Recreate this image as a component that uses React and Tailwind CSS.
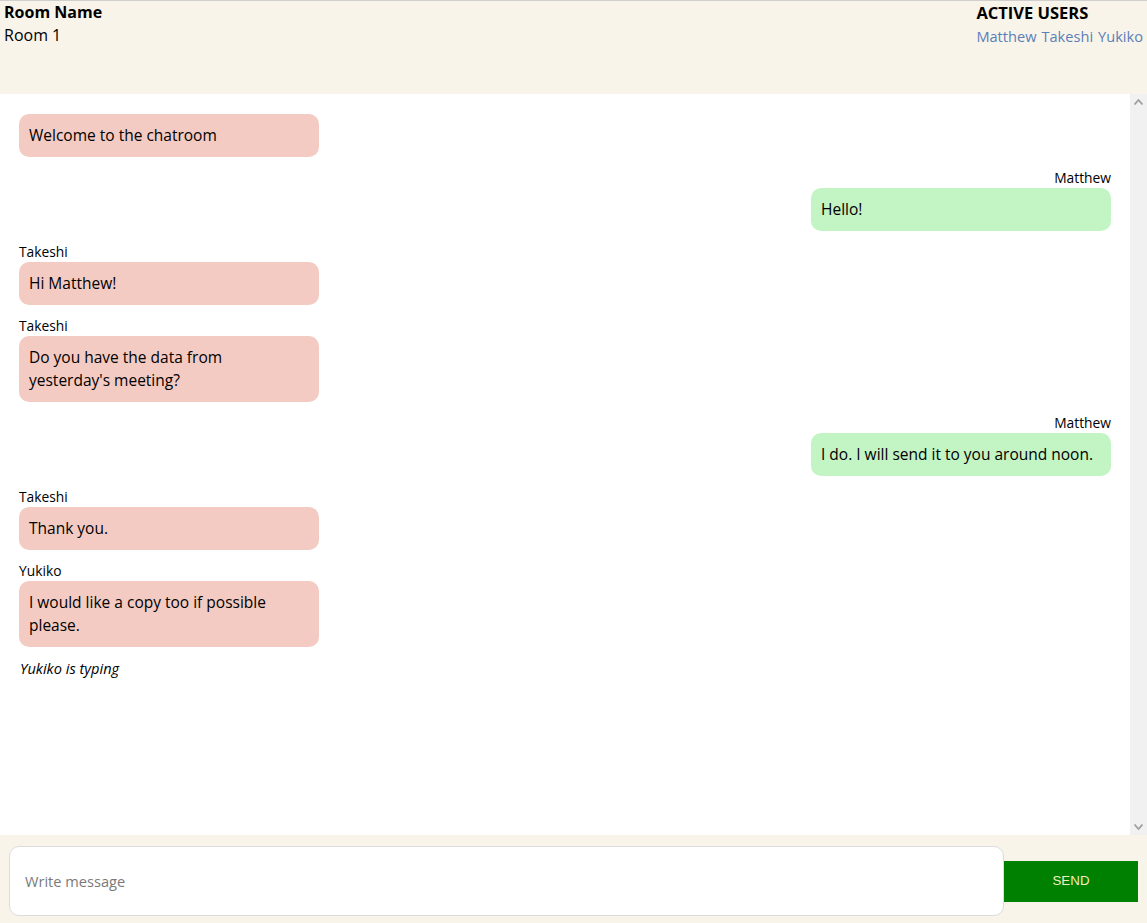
import React from "react";

const messages = [
  { user: null, text: ["Welcome to the chatroom"], mine: false },
  { user: "Matthew", text: ["Hello!"], mine: true },
  { user: "Takeshi", text: ["Hi Matthew!"], mine: false },
  { user: "Takeshi", text: ["Do you have the data from", "yesterday's meeting?"], mine: false },
  { user: "Matthew", text: ["I do. I will send it to you around noon."], mine: true },
  { user: "Takeshi", text: ["Thank you."], mine: false },
  { user: "Yukiko", text: ["I would like a copy too if possible please."], mine: false },
];

function Chevron({ up }) {
  return (
    <svg width="9" height="6" viewBox="0 0 9 6" className="block">
      <path
        d={up ? "M0.5 5.5 L4.5 1 L8.5 5.5" : "M0.5 0.5 L4.5 5 L8.5 0.5"}
        fill="none"
        stroke="#a0a0a0"
        strokeWidth="1.8"
      />
    </svg>
  );
}

export default function App() {
  return (
    <div
      className="flex flex-col h-[923px] w-full overflow-hidden text-black"
      style={{ fontFamily: '"Open Sans", "DejaVu Sans", sans-serif' }}
    >
      <header className="h-[94px] shrink-0 border-t border-[#cfcfcf] bg-[#f8f4ea] flex justify-between px-1">
        <div>
          <div className="text-[16px] leading-[22px] font-bold">Room Name</div>
          <div className="text-[16px] leading-[24px]">Room 1</div>
        </div>
        <div>
          <div className="text-[16.5px] leading-[24px] font-bold">ACTIVE USERS</div>
          <div className="text-[14.6px] leading-[22px] text-[#5b7fb8] flex gap-[5px]">
            <span>Matthew</span>
            <span>Takeshi</span>
            <span>Yukiko</span>
          </div>
        </div>
      </header>

      <div className="flex-1 flex min-h-0">
        <main className="flex-1 bg-white px-[19px] pt-5">
          {messages.map((m, i) => (
            <div
              key={i}
              className={`mb-[11px] flex flex-col ${m.mine ? "items-end" : "items-start"}`}
            >
              {m.user && (
                <div className="text-[13.8px] leading-[20px]">{m.user}</div>
              )}
              <div
                className={`w-[300px] rounded-[10px] p-[10px] text-[15.5px] leading-[23px] ${
                  m.mine ? "bg-[#c3f4c3]" : "bg-[#f4cbc2]"
                }`}
              >
                {m.text.map((line, j) => (
                  <React.Fragment key={j}>
                    {j > 0 && <br />}
                    {line}
                  </React.Fragment>
                ))}
              </div>
            </div>
          ))}
          <div className="text-[14.6px] leading-[20px] italic pl-px">Yukiko is typing</div>
        </main>
        <div className="w-[17px] shrink-0 bg-[#f1f1f1] flex flex-col justify-between items-center py-[5px]">
          <Chevron up />
          <Chevron />
        </div>
      </div>

      <footer className="h-[88px] shrink-0 bg-[#f8f4ea] flex items-center pt-1 pl-[9px] pr-[9px]">
        <input
          autoFocus
          placeholder="Write message"
          className="h-[70px] flex-1 rounded-[10px] border border-[#dcdcdc] bg-white px-[15px] text-[14.6px] text-black placeholder:text-[#7a7a7a] outline-none caret-black"
        />
        <button
          className="h-[41px] w-[134px] bg-[#008000] text-[#f2ecc0] text-[13.333px]"
          style={{ fontFamily: '"Liberation Sans", Arial, sans-serif' }}
        >
          SEND
        </button>
      </footer>
    </div>
  );
}
